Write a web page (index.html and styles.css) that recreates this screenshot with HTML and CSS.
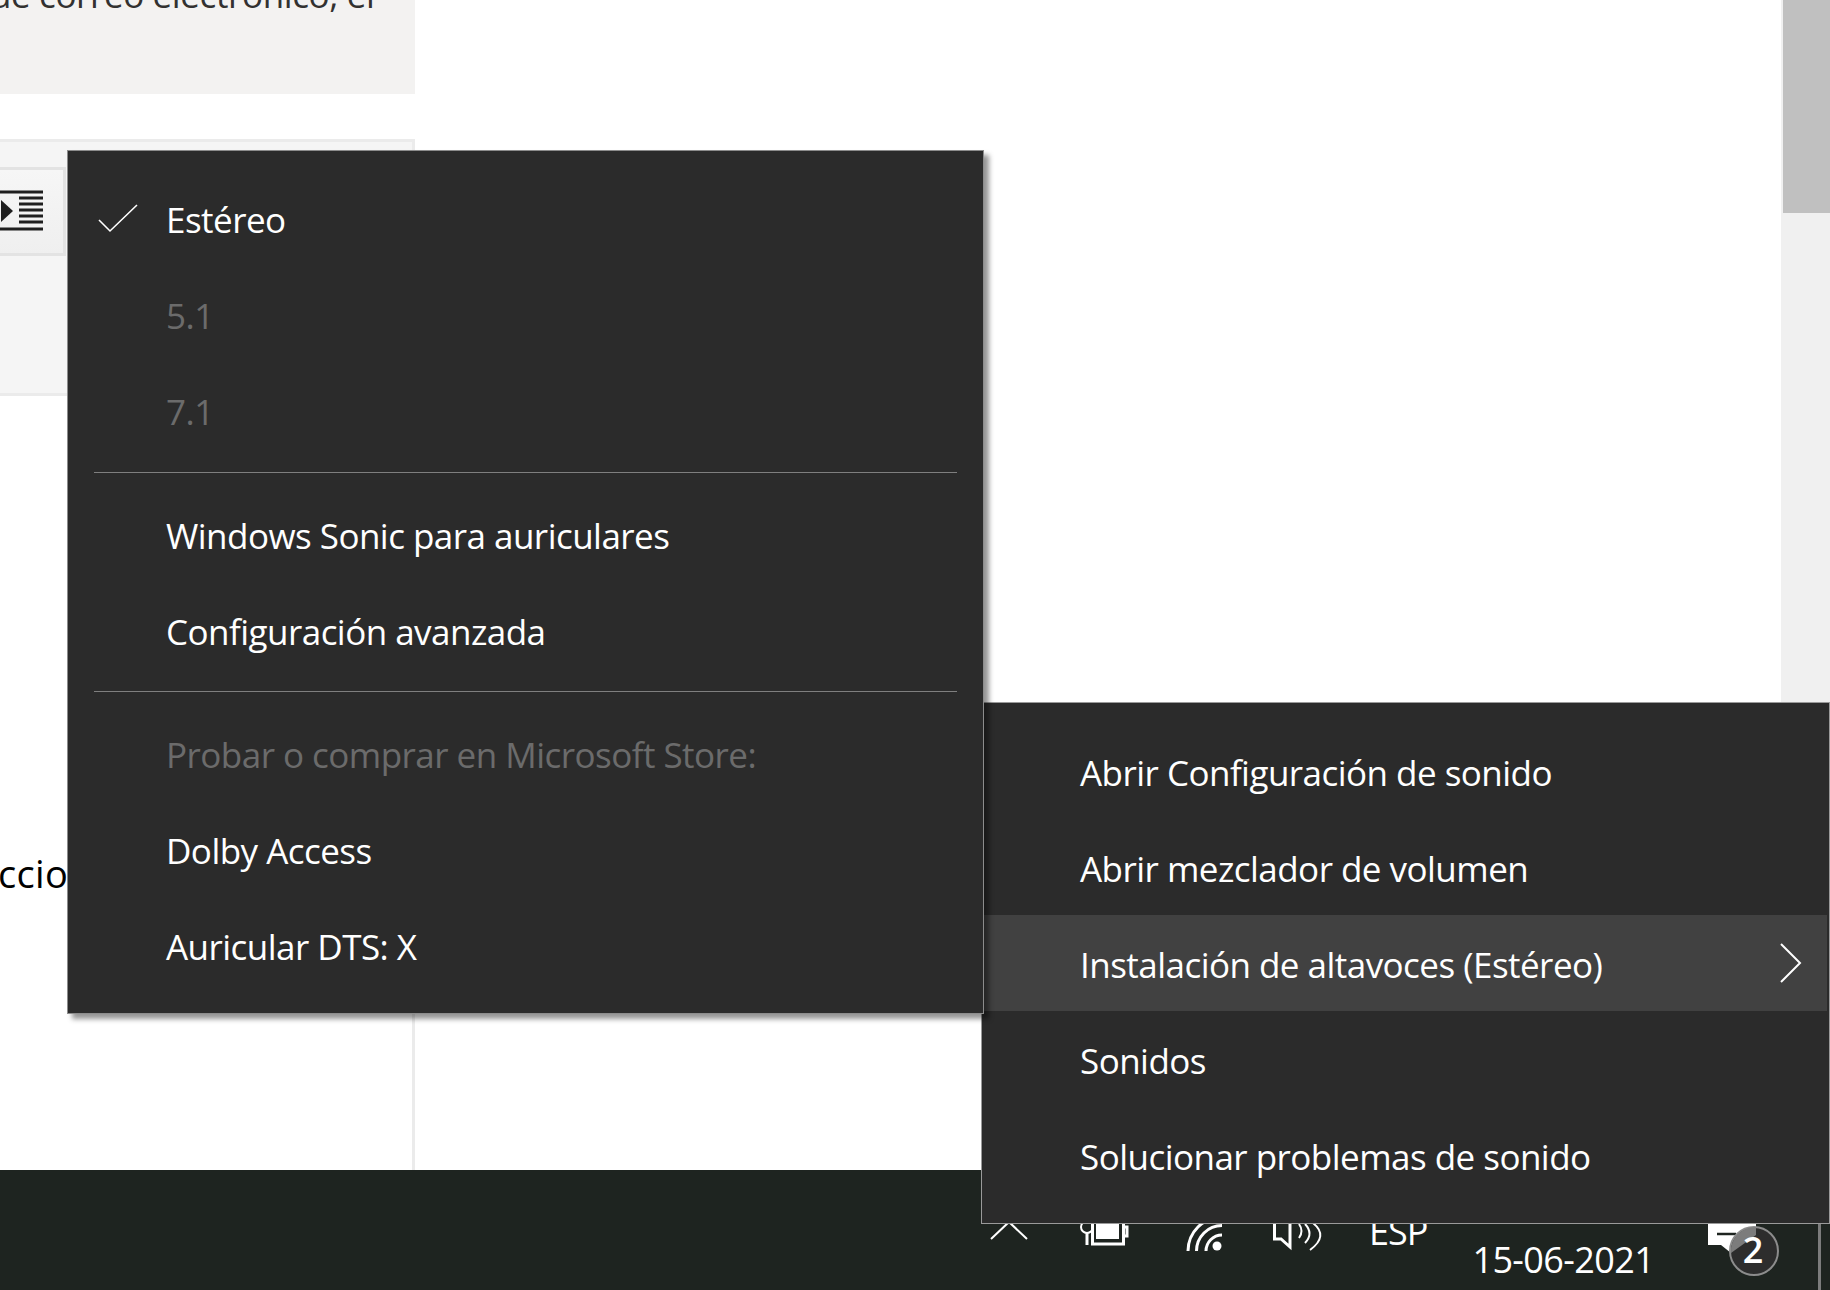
FILE: index.html
```html
<!DOCTYPE html>
<html lang="es">
<head>
<meta charset="utf-8">
<title>Sonido</title>
<link rel="stylesheet" href="styles.css">
</head>
<body>
<div class="screen">
  <div class="desktop">
    <div class="column">
      <div class="note"><p class="note-text">de correo electrónico, el</p></div>
      <div class="editor">
        <div class="toolbar">
          <div class="tool">
            <svg class="indent" width="45" height="42" viewBox="0 0 45 42"><path d="M0 2h43M0 39h43M19 8h24M19 14h24M19 20h24M19 26h24M19 32h24" stroke="#1f1f1f" stroke-width="3"/><path d="M1 10l12 11L1 32z" fill="#1f1f1f"/></svg>
          </div>
        </div>
      </div>
      <div class="rest"><p class="rest-text">cciones</p></div>
    </div>
    <div class="scrollbar"><div class="thumb"></div></div>
  </div>
  <div class="taskbar">
    <svg class="t-chevron" width="38" height="22" viewBox="0 0 38 22"><path d="M1 19L19 2l18 17" class="stroke"/></svg>
    <svg class="t-battery" width="52" height="28" viewBox="0 0 52 28"><circle cx="9" cy="7" r="6" class="stroke"/><path d="M9 12v13" class="stroke thick"/><path d="M14.500 0v24h31V0M46 7h3v9h-3" class="stroke thick"/><path d="M18 0h23v19H18z" class="fill"/></svg>
    <svg class="t-wifi" width="38" height="32" viewBox="0 0 38 32"><path d="M3 31A34 34 0 0 1 37-3M11.500 31A25.500 25.500 0 0 1 37 5.500M21 31A16 16 0 0 1 37 15" class="stroke thick"/><circle cx="32" cy="26" r="4.500" class="fill"/></svg>
    <svg class="t-speaker" width="52" height="32" viewBox="0 0 52 32"><path d="M2.500 0v19H9l9 8V0" class="stroke thick"/><path d="M27 4q5 7 0 14M33 4q9 9.500 0 19M41 3q16 13-3 27" class="stroke"/></svg>
    <span class="t-lang">ESP</span>
    <span class="t-date">15-06-2021</span>
    <svg class="t-notify" width="85" height="58" viewBox="0 0 85 58"><path d="M7 4h48v21H30v8l-10-8H7z" class="fill"/><path d="M16 14h19" stroke="#1e2420" stroke-width="2.500"/><circle cx="53" cy="31" r="24" fill="#2d2d2d" stroke="#8c8c8c" stroke-width="2"/><path d="M30 33A24 24 0 0 1 55 7v8z" fill="#7c7c7c"/><text x="52" y="43" class="badge-num" text-anchor="middle">2</text></svg>
    <div class="t-desktop"></div>
  </div>

  <div class="menu menu-sub">
    <div class="row">Abrir Configuración de sonido</div>
    <div class="row">Abrir mezclador de volumen</div>
    <div class="row row-hover">Instalación de altavoces (Estéreo)
      <svg class="arrow" width="22" height="40" viewBox="0 0 22 40"><path d="M1 1l19 19L1 39" class="stroke"/></svg>
    </div>
    <div class="row">Sonidos</div>
    <div class="row">Solucionar problemas de sonido</div>
  </div>

  <div class="menu menu-main">
    <div class="row">
      <svg class="check" width="40" height="30" viewBox="0 0 40 30"><path d="M1 16l11 11L39 1" class="stroke thin"/></svg>
      Estéreo</div>
    <div class="row disabled">5.1</div>
    <div class="row disabled">7.1</div>
    <div class="sep"></div>
    <div class="row">Windows Sonic para auriculares</div>
    <div class="row">Configuración avanzada</div>
    <div class="sep sep-tight"></div>
    <div class="row disabled">Probar o comprar en Microsoft Store:</div>
    <div class="row">Dolby Access</div>
    <div class="row">Auricular DTS: X</div>
  </div>
</div>
</body>
</html>
```

FILE: styles.css
```css
html, body {
  margin: 0;
  padding: 0;
  background: #fff;
}

.screen {
  position: relative;
  width: 1830px;
  height: 1290px;
  overflow: hidden;
  display: flex;
  flex-direction: column;
  font-family: "Open Sans", "Liberation Sans", sans-serif;
}

.desktop {
  flex: none;
  height: 1170px;
  display: flex;
  justify-content: space-between;
}

.column {
  width: 415px;
  display: flex;
  flex-direction: column;
}

.note {
  height: 94px;
  background: #f3f2f1;
  overflow: hidden;
}

.note-text {
  margin: -29px 0 0 -10px;
  font-size: 35px;
  line-height: 48px;
  color: #323130;
  white-space: nowrap;
  letter-spacing: -0.38px;
}

.editor {
  height: 257px;
  margin-top: 45px;
  box-sizing: border-box;
  background: #f5f5f5;
  border: 3px solid #ebebeb;
  border-left: 0;
  padding-top: 25px;
}

.toolbar {
  width: 66px;
  height: 89px;
  box-sizing: border-box;
  border: 3px solid #e3e3e3;
  border-left: 0;
  background: linear-gradient(#f6f6f6, #efefef);
  padding-top: 20px;
}

.indent {
  display: block;
}

.rest {
  flex: 1;
  border-right: 3px solid #ebebeb;
  overflow: hidden;
}

.rest-text {
  margin: 452px 0 0 -2px;
  font-size: 38px;
  line-height: 50px;
  color: #000;
  white-space: nowrap;
  letter-spacing: 0.3px;
}

.scrollbar {
  width: 49px;
  background: #f0f0f0;
  display: flex;
  justify-content: flex-end;
}

.thumb {
  width: 47px;
  height: 213px;
  background: #c0c0c0;
}

.taskbar {
  flex: none;
  height: 120px;
  box-sizing: border-box;
  overflow: hidden;
  display: flex;
  align-items: flex-start;
  padding-top: 50px;
  background: #1e2420;
  color: #fff;
}

.stroke {
  fill: none;
  stroke: #fff;
  stroke-width: 2;
}

.stroke.thick {
  stroke-width: 3;
}

.stroke.thin {
  stroke-width: 1.6;
}

.fill {
  fill: #fff;
}

.t-chevron { margin-left: 990px; }
.t-battery { margin-left: 50px; }
.t-wifi { margin-left: 55px; }
.t-speaker { margin-left: 49px; }

.t-lang {
  margin: -13px 0 0 45px;
  font-size: 36px;
  font-weight: 400;
  line-height: 50px;
  letter-spacing: -1px;
}

.t-date {
  margin: 15px 0 0 45px;
  font-size: 36px;
  font-weight: 400;
  line-height: 50px;
  letter-spacing: -0.6px;
}

.t-notify { margin-left: 47px; }

.badge-num {
  fill: #fff;
  font-size: 36px;
  font-weight: 600;
  font-family: "Open Sans", sans-serif;
}

.t-desktop {
  width: 3px;
  height: 70px;
  margin-left: 32px;
  background: #7c7c7c;
}

.menu {
  position: absolute;
  box-sizing: border-box;
  background: #2b2b2b;
  color: #fff;
  font-size: 35px;
  font-weight: 400;
  letter-spacing: -0.53px;
}

.menu-main {
  left: 67px;
  top: 150px;
  width: 917px;
  height: 864px;
  padding-top: 19px;
  border: 1px solid #8c8c8c;
  box-shadow: 5px 5px 5px rgba(0, 0, 0, 0.42);
}

.menu-sub {
  left: 981px;
  top: 702px;
  width: 849px;
  height: 522px;
  padding: 20px 2px;
  border: 1px solid #9a9a9a;
}

.row {
  position: relative;
  height: 96px;
  line-height: 99px;
  padding-left: 98px;
  white-space: nowrap;
}

.menu-sub .row {
  padding-left: 96px;
}

.row-hover {
  background: #414141;
}

.disabled {
  color: #6b6b6b;
}

.sep {
  height: 1px;
  margin: 14px 26px 13px;
  background: #7f7f7f;
}

.sep-tight {
  margin-top: 13px;
  margin-bottom: 13px;
}

.check {
  position: absolute;
  left: 30px;
  top: 34px;
}

.arrow {
  position: absolute;
  right: 25px;
  top: 28px;
}
```
